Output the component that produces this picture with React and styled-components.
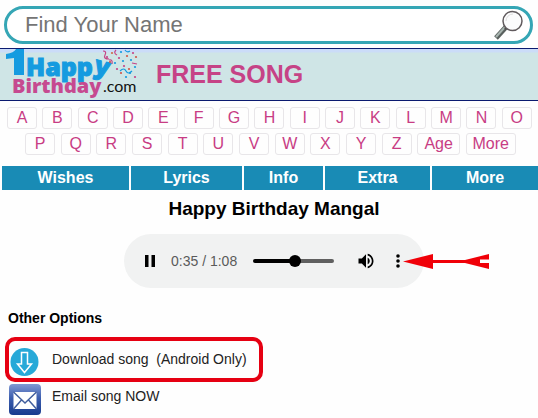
import React, { useState } from 'react'
import styled, { createGlobalStyle } from 'styled-components'

const GlobalStyle = createGlobalStyle`
  body {
    margin: 0;
    background: #fefefe;
    color: #111;
    font-family: "Liberation Sans", Arial, sans-serif;
  }

  * {
    box-sizing: border-box;
  }
`

const SearchForm = styled.form`
  display: flex;
  align-items: center;
  height: 38px;
  margin: 6px 5px 4px 4px;
  padding: 0 5px 0 18px;
  border: 3px solid #35a6b5;
  border-radius: 19px;
  background: #fff;
`

const SearchInput = styled.input`
  flex: 1;
  min-width: 0;
  padding: 0;
  border: none;
  outline: none;
  background: none;
  font-family: inherit;
  font-size: 22px;
  color: #333;

  &::placeholder {
    color: #757575;
    opacity: 1;
  }
`

const IconButton = styled.button`
  display: flex;
  flex: none;
  padding: 0;
  border: none;
  background: none;
  color: #000;
  cursor: pointer;
`

const Banner = styled.header`
  display: flex;
  align-items: center;
  gap: 18px;
  height: 53px;
  padding-left: 4px;
  border-top: 1px solid #0a1a70;
  border-bottom: 1px solid #0a1a70;
  background: linear-gradient(#cbdcf8 3px, #cfe5e6 4px);

  h1 {
    margin: 0;
    font-size: 25px;
    color: #c64386;
  }
`

const LogoLink = styled.a`
  display: flex;
`

const Letters = styled.nav`
  display: flex;
  flex-direction: column;
  gap: 4px;
  padding: 6px 6px 0 7px;
`

const LetterRow = styled.div`
  display: flex;
  justify-content: space-between;
  padding: ${({ $inset }) => ($inset ? '0 16px 0 18px' : '0')};
`

const Letter = styled.a`
  display: flex;
  justify-content: center;
  min-width: 30px;
  height: 22px;
  padding: 0 6px;
  border: 1px solid #e8e6e9;
  border-radius: 3px;
  font-size: 16px;
  line-height: 20px;
  color: #c83c84;
  text-decoration: none;
`

const Menu = styled.nav`
  display: grid;
  grid-template-columns: 127fr 111fr 79fr 105fr 106fr;
  gap: 2px;
  margin: 11px 0 0 2px;

  a {
    background: #198bb5;
    color: #fff;
    font-size: 16px;
    font-weight: bold;
    line-height: 24px;
    text-align: center;
    text-decoration: none;
  }
`

const SongTitle = styled.h2`
  margin: 7px 0 14px;
  padding-left: 10px;
  font-size: 19px;
  line-height: 23px;
  text-align: center;
  color: #000;
`

const Player = styled.section`
  position: relative;
  display: flex;
  align-items: center;
  width: 300px;
  height: 54px;
  margin: 0 auto;
  left: 5px;
  padding: 0 16px 0 14px;
  border-radius: 27px;
  background: #f1f2f2;
`

const Time = styled.span`
  flex: none;
  width: 82px;
  margin-left: 9px;
  font-size: 14px;
  color: #5a5a5a;
`

const Seek = styled.input`
  flex: 1;
  min-width: 0;
  height: 12px;
  margin: 0 22px 0 0;
  appearance: none;
  border-radius: 2px;
  background: none;

  &::-webkit-slider-runnable-track {
    height: 4px;
    border-radius: 2px;
    background: linear-gradient(to right, #000 ${({ $played }) => $played}%, #606060 ${({ $played }) => $played}%);
  }

  &::-webkit-slider-thumb {
    appearance: none;
    width: 12px;
    height: 12px;
    margin-top: -4px;
    border-radius: 50%;
    background: #000;
  }
`

const MoreButton = styled(IconButton)`
  margin-left: 12px;
`

const Pointer = styled.svg`
  position: absolute;
  left: 279px;
  top: 19px;
`

const Options = styled.section`
  padding: 22px 5px 0;

  h3 {
    margin: 0 0 11px 3px;
    font-size: 14px;
    line-height: 16px;
    color: #000;
  }
`

const OptionList = styled.ul`
  display: flex;
  flex-direction: column;
  align-items: flex-start;
  gap: 2px;
  margin: 0;
  padding: 0;
  list-style: none;
`

const Option = styled.a`
  display: flex;
  align-items: center;
  gap: 11px;
  padding-right: 12px;
  border: 4px solid ${({ $marked }) => ($marked ? '#e60012' : 'transparent')};
  border-top-width: ${({ $marked }) => ($marked ? '4px' : '0')};
  border-radius: 10px;
  font-size: 14px;
  color: #222;
  text-decoration: none;

  span {
    padding-bottom: ${({ $marked }) => ($marked ? '2px' : '8px')};
    white-space: pre;
  }
`

const topLetters = 'ABCDEFGHIJKLMNO'.split('')
const bottomLetters = [...'PQRSTUVWXYZ'.split(''), 'Age', 'More']
const menuItems = ['Wishes', 'Lyrics', 'Info', 'Extra', 'More']

// x, y, colour
const confetti = [
  [103, 8, '#c64386'], [108, 4, '#d06a4a'], [111, 14, '#159be0'], [115, 9, '#c64386'],
  [117, 3, '#159be0'], [120, 17, '#c64386'], [123, 7, '#d0564a'], [119, 12, '#159be0'],
  [127, 11, '#159be0'], [129, 4, '#c64386'], [132, 8, '#d0564a'], [131, 18, '#159be0'],
  [125, 20, '#d0564a'], [113, 20, '#c64386'], [106, 13, '#d0564a'], [122, 28, '#159be0'],
  [131, 28, '#c64386'], [126, 24, '#159be0'], [117, 24, '#d0564a'],
]

function Logo() {
  return (
    <svg width="134" height="51" viewBox="0 0 134 51" role="img" aria-label="1 Happy Birthday">
      <path d="M2 5 Q10 4 12 0 H20 V26 H10 V9 L2 10Z" fill="#159be0" />
      <g fontFamily="'Open Sans', sans-serif" fontWeight="800">
        <text x="22" y="27" fontSize="25" fill="#159be0" stroke="#159be0">
          Happ<tspan dy="-3" rotate="14">y</tspan>
        </text>
        <text x="8" y="44" fontSize="20" fill="#c64a90">Birthday</text>
      </g>
      <text x="99" y="43" fontSize="16" fontFamily="Lato, sans-serif" fill="#111">.com</text>
      <g fill="none" strokeWidth="1.2">
        <path d="M99 2 q4 0 2 4 t4 4 M112 1 q-3 3 1 5" stroke="#c64386" />
        <path d="M116 22 q4 -4 6 0 t6 0 M121 1 q2 3 5 1" stroke="#159be0" />
        <path d="M105 11 q4 -1 3 4 M128 14 l5 1" stroke="#c64386" />
      </g>
      {confetti.map(([x, y, fill]) => (
        <circle key={`${x}-${y}`} cx={x} cy={y} r="1.1" fill={fill} />
      ))}
    </svg>
  )
}

function SearchIcon() {
  return (
    <svg width="31" height="32" viewBox="0 0 31 32">
      <path d="M12 18 L2 29" stroke="#59605e" strokeWidth="5" />
      <path d="M11 18 L2 28" stroke="#a8b5b0" strokeWidth="2" />
      <path d="M14 16 L11 20" stroke="#444" strokeWidth="2" />
      <circle cx="18.500" cy="12" r="9.5" fill="#fbfbfc" stroke="#615b5e" strokeWidth="1.5" />
      <path d="M12 12 A7 7 0 0 1 19 5" fill="none" stroke="#ddd" />
    </svg>
  )
}

function DownloadIcon() {
  return (
    <svg width="32" height="37" viewBox="0 0 32 37">
      <circle cx="15.5" cy="21" r="14" fill="#27a9d8" />
      <path d="M12.500 11.500 H18.500 V23 H22.500 L15.500 31.500 L8.500 23 H12.500Z" fill="#27a9d8" stroke="#fff" strokeWidth="1.5" />
    </svg>
  )
}

function MailIcon() {
  return (
    <svg width="32" height="32" viewBox="0 0 32 32">
      <defs>
        <linearGradient id="mail" x1="0" y1="0" x2="0" y2="1">
          <stop offset="0" stopColor="#8199d3" />
          <stop offset="0.45" stopColor="#3c5eaf" />
          <stop offset="1" stopColor="#173a8d" />
        </linearGradient>
      </defs>
      <rect width="32" height="31" rx="4" fill="url(#mail)" />
      <rect x="4.500" y="8" width="23" height="17" fill="#fff" />
      <path d="M4.500 8 L16 19 L27.500 8 M4.500 25 L12.500 16 M27.500 25 L19.500 16" fill="none" stroke="#425f9e" strokeWidth="1.5" />
    </svg>
  )
}

function App() {
  const [position, setPosition] = useState(35)

  return (
    <>
      <GlobalStyle />
      <SearchForm onSubmit={(e) => e.preventDefault()}>
        <SearchInput type="text" placeholder="Find Your Name" aria-label="Find Your Name" />
        <IconButton type="submit" aria-label="Search"><SearchIcon /></IconButton>
      </SearchForm>

      <Banner>
        <LogoLink href="#"><Logo /></LogoLink>
        <h1>FREE SONG</h1>
      </Banner>

      <Letters>
        <LetterRow>
          {topLetters.map((l) => <Letter key={l} href={`#${l}`}>{l}</Letter>)}
        </LetterRow>
        <LetterRow $inset>
          {bottomLetters.map((l) => <Letter key={l} href={`#${l}`}>{l}</Letter>)}
        </LetterRow>
      </Letters>

      <Menu>
        {menuItems.map((item) => <a key={item} href="#">{item}</a>)}
      </Menu>

      <SongTitle>Happy Birthday Mangal</SongTitle>

      <Player>
        <IconButton type="button" aria-label="Pause">
          <svg width="24" height="24" viewBox="0 0 24 24">
            <path d="M7 6 h3.500 v12 H7Z M13.500 6 H17 v12 h-3.500Z" />
          </svg>
        </IconButton>
        <Time>0:35 / 1:08</Time>
        <Seek
          type="range"
          aria-label="Seek"
          min="0"
          max="68"
          value={position}
          $played={(position / 68) * 100}
          onChange={(e) => setPosition(Number(e.target.value))}
        />
        <IconButton type="button" aria-label="Mute">
          <svg width="20" height="20" viewBox="0 0 24 24">
            <path d="M3 9v6h4l5 5V4L7 9H3zm13.500 3c0-1.770-1.020-3.290-2.500-4.030v8.050c1.480-.73 2.500-2.250 2.500-4.020zM14 3.230v2.060c2.890.86 5 3.540 5 6.710s-2.110 5.850-5 6.710v2.060c4.010-.91 7-4.490 7-8.770s-2.990-7.860-7-8.770z" />
          </svg>
        </IconButton>
        <MoreButton type="button" aria-label="More options">
          <svg width="20" height="20" viewBox="0 0 20 20">
            <circle cx="10" cy="5" r="1.8" />
            <circle cx="10" cy="10" r="1.8" />
            <circle cx="10" cy="15" r="1.8" />
          </svg>
        </MoreButton>
        <Pointer width="88" height="17" viewBox="0 0 88 17" fill="#f00008">
          <path d="M0 8.500 L30 1 V7 H62 L86 1 V6.500 H77 V10 H86 V16 L62 10 H30 V16Z" />
        </Pointer>
      </Player>

      <Options>
        <h3>Other Options</h3>
        <OptionList>
          <li>
            <Option href="#" $marked>
              <DownloadIcon />
              <span>Download song  (Android Only)</span>
            </Option>
          </li>
          <li>
            <Option href="#">
              <MailIcon />
              <span>Email song NOW</span>
            </Option>
          </li>
        </OptionList>
      </Options>
    </>
  )
}

export default App
